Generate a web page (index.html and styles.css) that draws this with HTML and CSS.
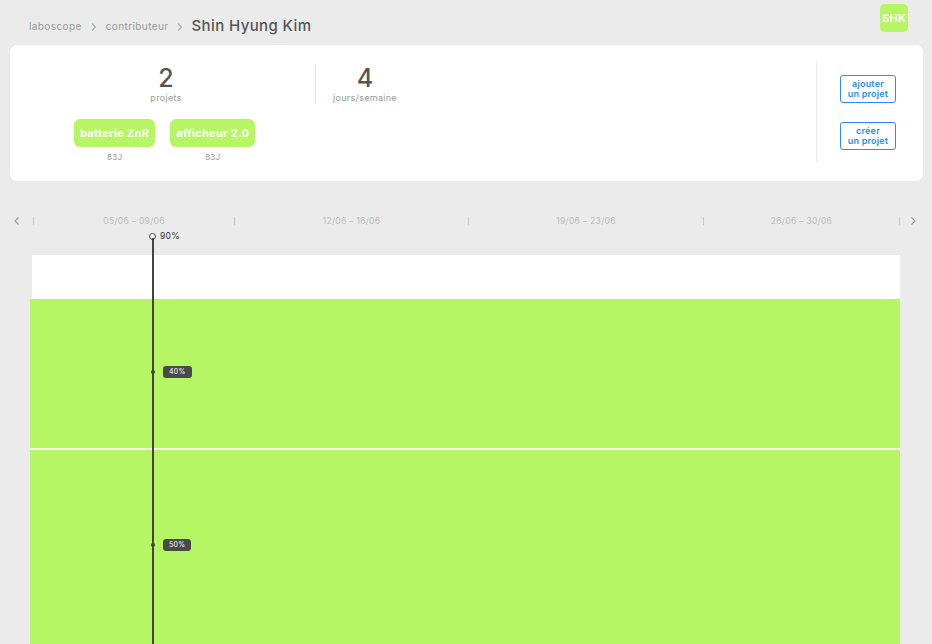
FILE: index.html
```html
<!DOCTYPE html>
<html lang="fr">
<head>
<meta charset="utf-8">
<title>Shin Hyung Kim</title>
<link rel="stylesheet" href="styles.css">
</head>
<body>
<header class="topbar">
  <nav class="crumbs">
    <span class="crumb">laboscope</span>
    <svg class="chev" viewBox="0 0 8 10" width="8" height="10"><path d="M2 1.5 L5.5 5 L2 8.5" fill="none" stroke="#aaa" stroke-width="1.1"/></svg>
    <span class="crumb">contributeur</span>
    <svg class="chev" viewBox="0 0 8 10" width="8" height="10"><path d="M2 1.5 L5.5 5 L2 8.5" fill="none" stroke="#aaa" stroke-width="1.1"/></svg>
    <span class="crumb-current">Shin Hyung Kim</span>
  </nav>
  <div class="avatar">SHK</div>
</header>

<section class="card">
  <div class="card-main">
    <div class="stats">
      <div class="stat stat-first">
        <div class="stat-num">2</div>
        <div class="stat-label">projets</div>
      </div>
      <div class="stat-divider"></div>
      <div class="stat">
        <div class="stat-num">4</div>
        <div class="stat-label">jours/semaine</div>
      </div>
    </div>
    <div class="chips">
      <div class="chip-wrap">
        <div class="chip">batterie ZnR</div>
        <div class="chip-sub">83J</div>
      </div>
      <div class="chip-wrap">
        <div class="chip">afficheur 2.0</div>
        <div class="chip-sub">83J</div>
      </div>
    </div>
  </div>
  <div class="card-side">
    <button class="btn">ajouter<br>un projet</button>
    <button class="btn">créer<br>un projet</button>
  </div>
</section>

<section class="timeline">
  <div class="weeks">
    <svg class="nav" viewBox="0 0 8 10" width="8" height="10"><path d="M5.5 1.5 L2 5 L5.5 8.5" fill="none" stroke="#999" stroke-width="1.1"/></svg>
    <div class="week-grid">
      <div class="week">05/06 – 09/06</div>
      <div class="week">12/06 – 16/06</div>
      <div class="week">19/06 – 23/06</div>
      <div class="week">26/06 – 30/06</div>
    </div>
    <svg class="nav nav-right" viewBox="0 0 8 10" width="8" height="10"><path d="M2.5 1.5 L6 5 L2.5 8.5" fill="none" stroke="#999" stroke-width="1.1"/></svg>
  </div>
  <div class="chart">
    <div class="band band-white"></div>
    <div class="band band-green band-top"></div>
    <div class="band band-green band-bottom"></div>
    <div class="cursor">
      <div class="cursor-head"><span class="cursor-ring"></span><span class="cursor-val">90%</span></div>
      <div class="cursor-line"></div>
      <div class="cursor-tag" style="top:131px"><span class="dot"></span><span class="tag">40%</span></div>
      <div class="cursor-tag" style="top:304px"><span class="dot"></span><span class="tag">50%</span></div>
    </div>
  </div>
</section>
</body>
</html>
```

FILE: styles.css
```css
* { box-sizing: border-box; }
html, body { margin: 0; padding: 0; }
body {
  background: #ebebeb;
  font-family: "Inter", "Open Sans", "DejaVu Sans", sans-serif;
  color: #555;
  width: 932px;
  height: 644px;
  overflow: hidden;
  letter-spacing: 0.3px;
}

.topbar {
  height: 45px;
  display: flex;
  justify-content: space-between;
  align-items: flex-start;
  padding: 4px 24px 0 29px;
}
.crumbs {
  display: flex;
  align-items: center;
  margin-top: 12px;
  gap: 8px;
}
.crumb { font-size: 10px; color: #999; letter-spacing: 0.4px; }
.chev { display: block; margin-top: 3px; }
.crumb-current { font-size: 15px; color: #555; font-weight: 500; letter-spacing: 0.4px; margin-left: -1px; }
.avatar {
  width: 28px;
  height: 28px;
  border-radius: 5px;
  background: #b6f563;
  color: #fff;
  font-weight: 700;
  font-size: 11px;
  display: flex;
  align-items: center;
  justify-content: center;
}

.card {
  margin: 0 9px 0 10px;
  height: 136px;
  background: #fff;
  border-radius: 7px;
  display: flex;
}
.card-main { flex: 1; }
.stats {
  display: flex;
  align-items: center;
  padding-top: 19px;
}
.stat {
  width: 98px;
  display: flex;
  flex-direction: column;
  align-items: center;
}
.stat-first { margin-left: 107px; margin-right: 100px; }
.stat-num { font-size: 25px; line-height: 28px; color: #555; font-weight: 500; }
.stat-label { font-size: 9px; color: #999; line-height: 12px; }
.stat-divider { width: 1px; height: 38px; background: #e6e6e6; }

.chips {
  display: flex;
  gap: 15px;
  padding-left: 64px;
  margin-top: 15px;
}
.chip-wrap { display: flex; flex-direction: column; align-items: center; }
.chip {
  height: 28px;
  padding: 0 6px;
  border-radius: 6px;
  background: #b6f563;
  color: #fff;
  font-weight: 700;
  font-size: 11px;
  letter-spacing: 0.3px;
  display: flex;
  align-items: center;
}
.chip-sub { font-size: 8px; color: #999; margin-top: 5px; }

.card-side {
  width: 107px;
  margin: 16px 0 19px;
  border-left: 1px solid #ececec;
  display: flex;
  flex-direction: column;
  align-items: center;
  padding: 14px 4px 0 0;
  gap: 19px;
}
.btn {
  width: 56px;
  height: 28px;
  border: 1.5px solid #2a8cf4;
  border-radius: 3px;
  background: #fff;
  color: #2a8cf4;
  font-family: inherit;
  font-weight: 600;
  font-size: 9px;
  line-height: 10px;
  letter-spacing: 0.2px;
  padding: 0;
}

.timeline { margin-top: 30px; }
.weeks {
  display: flex;
  align-items: center;
  height: 20px;
  padding-left: 13px;
}
.nav { display: block; }
.week-grid {
  display: grid;
  grid-template-columns: 201px 234px 235px 196px;
  margin-left: 12px;
  border-right: 1px solid #c8c8c8;
  height: 8px;
  align-items: center;
}
.week {
  font-size: 8.5px;
  color: #bbb;
  text-align: center;
  border-left: 1px solid #c8c8c8;
  line-height: 8px;
  height: 8px;
}
.nav-right { margin-left: 9px; }

.chart {
  position: relative;
  margin-top: 4px;
  padding-top: 20px;
}
.band-white {
  margin: 0 32px;
  height: 44px;
  background: #fff;
}
.band-green { background: #b6f563; margin: 0 32px 0 30px; }
.band-top { height: 149px; }
.band-bottom { height: 200px; border-top: 2px solid #f4ffe6; }

.cursor {
  position: absolute;
  left: 149px;
  top: 0;
  bottom: 0;
  width: 60px;
}
.cursor-head {
  position: absolute;
  top: -4px;
  left: 0;
  display: flex;
  align-items: center;
  gap: 4px;
}
.cursor-ring {
  width: 7px;
  height: 7px;
  border: 1.5px solid #444;
  border-radius: 50%;
  background: #fff;
}
.cursor-val { font-size: 8.5px; color: #333; }
.cursor-line {
  position: absolute;
  left: 3px;
  top: 3px;
  bottom: 0;
  width: 1.5px;
  background: #444;
}
.cursor-tag {
  position: absolute;
  left: 2px;
  display: flex;
  align-items: center;
  gap: 8px;
}
.dot { width: 4px; height: 4px; border-radius: 50%; background: #444; }
.tag {
  background: #4a4a4a;
  color: #fff;
  font-size: 7px;
  border-radius: 3px;
  padding: 0 6px;
  height: 12px;
  line-height: 12px;
}
```
